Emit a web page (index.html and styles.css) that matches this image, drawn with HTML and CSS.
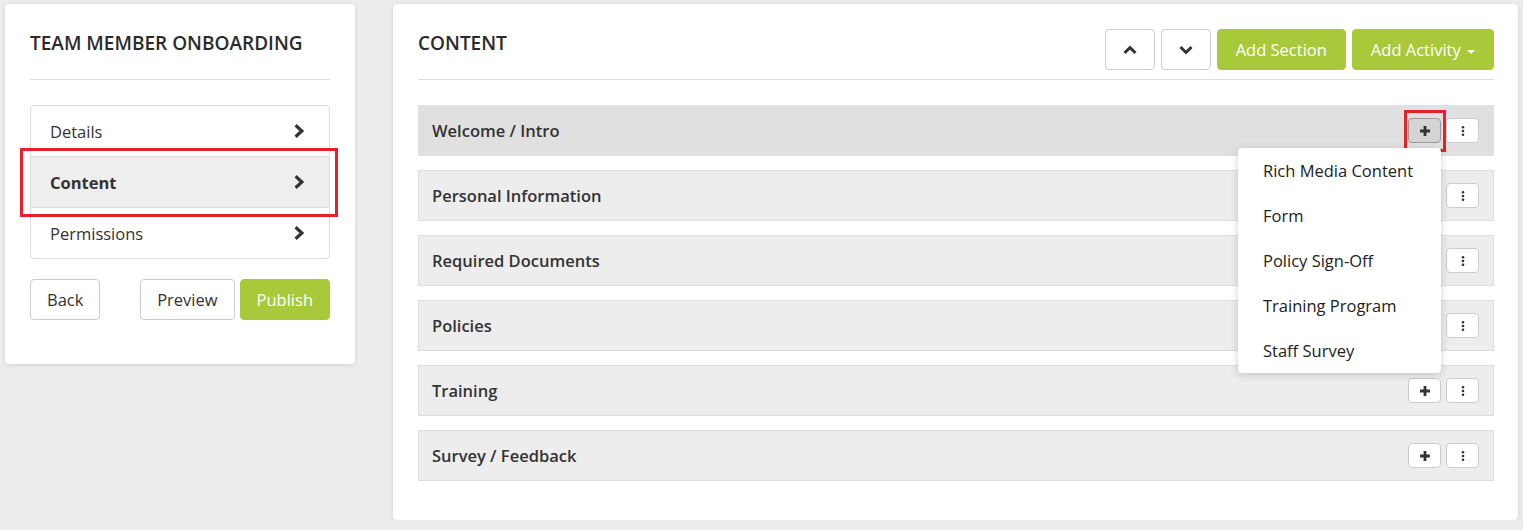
FILE: index.html
```html
<!DOCTYPE html>
<html lang="en">
<head>
    <meta charset="UTF-8">
    <title>Team Member Onboarding - Content</title>
    <link rel="stylesheet" href="styles.css">
</head>
<body>
    <div class="page">
        <div class="card side">
            <div class="card-head">
                <h2>TEAM MEMBER ONBOARDING</h2>
            </div>
            <div class="nav-list">
                <a class="nav-item">Details
                    <svg class="chev" viewBox="0 0 10 14"><polyline points="2,2 7.5,7 2,12"/></svg>
                </a>
                <a class="nav-item active">Content
                    <svg class="chev" viewBox="0 0 10 14"><polyline points="2,2 7.5,7 2,12"/></svg>
                    <span class="mark mark-nav"></span>
                </a>
                <a class="nav-item">Permissions
                    <svg class="chev" viewBox="0 0 10 14"><polyline points="2,2 7.5,7 2,12"/></svg>
                </a>
            </div>
            <div class="side-actions">
                <button class="btn">Back</button>
                <div class="right-btns">
                    <button class="btn">Preview</button>
                    <button class="btn btn-green">Publish</button>
                </div>
            </div>
        </div>

        <div class="card main">
            <div class="card-head main-head">
                <h2>CONTENT</h2>
                <div class="tools">
                    <button class="btn btn-icon">
                        <svg viewBox="0 0 16 10"><polyline points="2.5,8 8,2.5 13.5,8"/></svg>
                    </button>
                    <button class="btn btn-icon">
                        <svg viewBox="0 0 16 10"><polyline points="2.5,2 8,7.5 13.5,2"/></svg>
                    </button>
                    <button class="btn btn-green">Add Section</button>
                    <button class="btn btn-green">Add Activity <span class="caret"></span></button>
                </div>
            </div>

            <div class="sections">
                <div class="section open">
                    <span class="name">Welcome / Intro</span>
                    <div class="sec-btns">
                        <div class="add-wrap">
                            <button class="mini pressed"><svg viewBox="0 0 12 12"><path d="M6 1v10M1 6h10"/></svg></button>
                            <span class="mark mark-add"></span>
                            <ul class="menu">
                                <li>Rich Media Content</li>
                                <li>Form</li>
                                <li>Policy Sign-Off</li>
                                <li>Training Program</li>
                                <li>Staff Survey</li>
                            </ul>
                        </div>
                        <button class="mini"><svg viewBox="0 0 12 12"><circle cx="6" cy="2.2" r="1.3"/><circle cx="6" cy="6" r="1.3"/><circle cx="6" cy="9.8" r="1.3"/></svg></button>
                    </div>
                </div>
                <div class="section">
                    <span class="name">Personal Information</span>
                    <div class="sec-btns">
                        <button class="mini"><svg viewBox="0 0 12 12"><path d="M6 1v10M1 6h10"/></svg></button>
                        <button class="mini"><svg viewBox="0 0 12 12"><circle cx="6" cy="2.2" r="1.3"/><circle cx="6" cy="6" r="1.3"/><circle cx="6" cy="9.8" r="1.3"/></svg></button>
                    </div>
                </div>
                <div class="section">
                    <span class="name">Required Documents</span>
                    <div class="sec-btns">
                        <button class="mini"><svg viewBox="0 0 12 12"><path d="M6 1v10M1 6h10"/></svg></button>
                        <button class="mini"><svg viewBox="0 0 12 12"><circle cx="6" cy="2.2" r="1.3"/><circle cx="6" cy="6" r="1.3"/><circle cx="6" cy="9.8" r="1.3"/></svg></button>
                    </div>
                </div>
                <div class="section">
                    <span class="name">Policies</span>
                    <div class="sec-btns">
                        <button class="mini"><svg viewBox="0 0 12 12"><path d="M6 1v10M1 6h10"/></svg></button>
                        <button class="mini"><svg viewBox="0 0 12 12"><circle cx="6" cy="2.2" r="1.3"/><circle cx="6" cy="6" r="1.3"/><circle cx="6" cy="9.8" r="1.3"/></svg></button>
                    </div>
                </div>
                <div class="section">
                    <span class="name">Training</span>
                    <div class="sec-btns">
                        <button class="mini"><svg viewBox="0 0 12 12"><path d="M6 1v10M1 6h10"/></svg></button>
                        <button class="mini"><svg viewBox="0 0 12 12"><circle cx="6" cy="2.2" r="1.3"/><circle cx="6" cy="6" r="1.3"/><circle cx="6" cy="9.8" r="1.3"/></svg></button>
                    </div>
                </div>
                <div class="section">
                    <span class="name">Survey / Feedback</span>
                    <div class="sec-btns">
                        <button class="mini"><svg viewBox="0 0 12 12"><path d="M6 1v10M1 6h10"/></svg></button>
                        <button class="mini"><svg viewBox="0 0 12 12"><circle cx="6" cy="2.2" r="1.3"/><circle cx="6" cy="6" r="1.3"/><circle cx="6" cy="9.8" r="1.3"/></svg></button>
                    </div>
                </div>
            </div>
        </div>
    </div>
</body>
</html>
```

FILE: styles.css
```css
body {
    margin: 0;
    background-color: #ececec;
    font-family: "Open Sans", "Lato", Arial, sans-serif;
    color: #333;
    font-size: 16.5px;
}
.page {
    display: flex;
    align-items: flex-start;
    gap: 38px;
    padding: 4px 5px 0 5px;
}
.card {
    background: #fff;
    border-radius: 4px;
    box-shadow: 0 1px 4px rgba(0,0,0,0.12);
    padding: 25px;
    box-sizing: border-box;
}
.side {
    width: 350px;
    padding-bottom: 44px;
}
.main {
    flex: 1;
    padding: 25px 24px 25px 25px;
}
.card-head {
    border-bottom: 1px solid #ddd;
    padding-bottom: 22px;
}
.card-head h2 {
    margin: 0;
    font-size: 19px;
    font-weight: 600;
    line-height: 28px;
    color: #2b2b2b;
}
.nav-list {
    margin-top: 25px;
    border: 1px solid #ddd;
    border-radius: 4px;
}
.nav-item {
    position: relative;
    display: flex;
    justify-content: space-between;
    align-items: center;
    height: 50px;
    padding: 0 24px 0 19px;
    border-top: 1px solid #ddd;
}
.nav-item:first-child {
    border-top: none;
}
.nav-item.active {
    background: #eee;
    font-weight: 700;
}
.chev {
    width: 12px;
    height: 16px;
    fill: none;
    stroke: #333;
    stroke-width: 2.8;
}
.side-actions {
    display: flex;
    justify-content: space-between;
    margin-top: 20px;
}
.right-btns {
    display: flex;
    gap: 5px;
}
.btn {
    height: 41px;
    padding: 0 16px;
    border: 1px solid #ccc;
    border-radius: 4px;
    background: #fff;
    color: #333;
    font-family: inherit;
    font-size: 16.5px;
}
.btn-green {
    background: #a8c939;
    border-color: #a8c939;
    color: #fff;
}
.main-head {
    display: flex;
    justify-content: space-between;
    align-items: flex-start;
    padding-bottom: 9px;
}
.tools {
    display: flex;
    gap: 6px;
}
.tools .btn-green {
    padding: 0 18px;
}
.btn-icon {
    width: 50px;
    display: flex;
    align-items: center;
    justify-content: center;
    padding: 0;
}
.btn-icon svg {
    width: 16px;
    height: 10px;
    fill: none;
    stroke: #333;
    stroke-width: 3;
}
.caret {
    display: inline-block;
    width: 0;
    height: 0;
    margin-left: 2px;
    vertical-align: middle;
    border-top: 4px solid #fff;
    border-left: 4px solid transparent;
    border-right: 4px solid transparent;
}
.sections {
    margin-top: 25px;
}
.section {
    display: flex;
    justify-content: space-between;
    align-items: center;
    height: 49px;
    padding: 0 14px 0 13px;
    margin-bottom: 14px;
    background: #ededed;
    border: 1px solid #ddd;
}
.section.open {
    background: #e0e0e0;
    border-color: #e0e0e0;
}
.name {
    font-weight: 600;
}
.sec-btns {
    display: flex;
    gap: 5px;
}
.add-wrap {
    position: relative;
}
.mini {
    display: flex;
    align-items: center;
    justify-content: center;
    width: 33px;
    height: 25px;
    padding: 0;
    background: #fff;
    border: 1px solid #ccc;
    border-radius: 4px;
}
.mini svg {
    width: 12px;
    height: 12px;
    fill: #333;
    stroke: #333;
    stroke-width: 2.8;
}
.mini svg circle {
    stroke: none;
}
.mini.pressed {
    background: #d4d4d4;
    border-color: #999;
}
.menu {
    position: absolute;
    top: 30px;
    right: 0;
    width: 203px;
    margin: 0;
    padding: 0;
    list-style: none;
    background: #fff;
    border-radius: 4px;
    box-shadow: 0 2px 8px rgba(0,0,0,0.18);
    z-index: 5;
}
.menu li {
    height: 45px;
    line-height: 45px;
    padding-left: 25px;
    color: #222;
}
.mark {
    position: absolute;
    border: 3px solid #e8202a;
    pointer-events: none;
}
.mark-nav {
    left: -11px;
    right: -9px;
    top: -9px;
    bottom: -10px;
}
.mark-add {
    left: -4px;
    right: -5px;
    top: -8px;
    bottom: -9px;
}
```
